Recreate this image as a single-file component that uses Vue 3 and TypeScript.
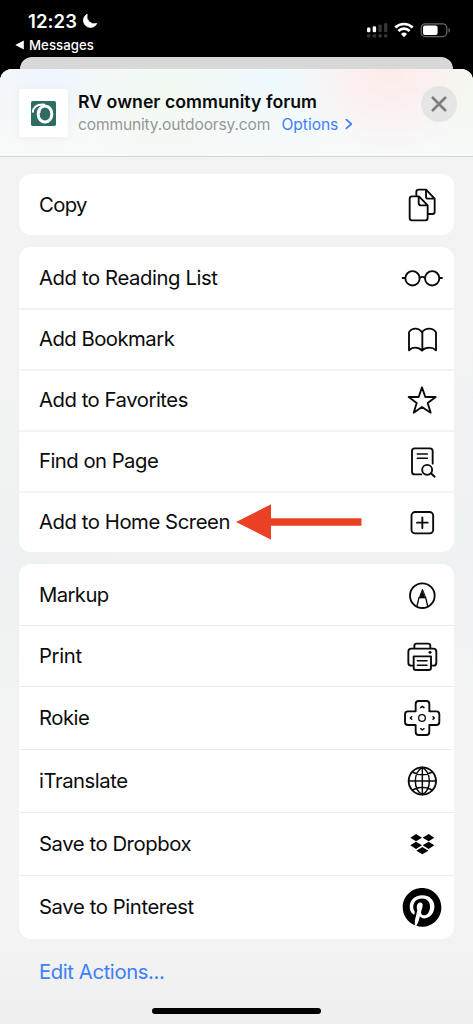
<script setup lang="ts">
interface Action {
  label: string
  icon: string
  tracking: number
  arrow?: boolean
}

const groups: { name: string; rows: Action[] }[] = [
  { name: 'single', rows: [{ label: 'Copy', icon: 'copy', tracking: -0.65 }] },
  {
    name: 'page',
    rows: [
      { label: 'Add to Reading List', icon: 'glasses', tracking: -0.4 },
      { label: 'Add Bookmark', icon: 'book', tracking: -0.52 },
      { label: 'Add to Favorites', icon: 'star', tracking: -0.47 },
      { label: 'Find on Page', icon: 'find', tracking: -0.52 },
      { label: 'Add to Home Screen', icon: 'plus', tracking: -0.44, arrow: true },
    ],
  },
  {
    name: 'apps',
    rows: [
      { label: 'Markup', icon: 'markup', tracking: -0.6 },
      { label: 'Print', icon: 'print', tracking: -0.35 },
      { label: 'Rokie', icon: 'rokie', tracking: -0.5 },
      { label: 'iTranslate', icon: 'globe', tracking: -0.45 },
      { label: 'Save to Dropbox', icon: 'dropbox', tracking: -0.44 },
      { label: 'Save to Pinterest', icon: 'pinterest', tracking: -0.4 },
    ],
  },
]
</script>

<template>
  <div class="phone">
    <div class="status">
      <div class="status-left">
        <div class="clock">
          <span class="time">12:23</span>
          <svg class="moon" width="16" height="16" viewBox="0 0 16 16">
            <path d="M5.2 1.2A7 7 0 1 0 14.8 10.4 7.4 7.4 0 0 1 5.2 1.2z" fill="#fff" stroke="#fff" stroke-width=".8" stroke-linejoin="round" />
          </svg>
        </div>
        <div class="back">
          <svg width="9" height="10" viewBox="0 0 9 10"><path d="M.3 5 8.8.6v8.8z" fill="#fff" /></svg>
          <span class="back-label">Messages</span>
        </div>
      </div>
      <svg class="signals" width="88" height="18" viewBox="0 0 88 18">
        <g fill="#fff">
          <rect x="1" y="5.6" width="3.4" height="4.6" rx="1.2" />
          <rect x="6.7" y="4.2" width="3.4" height="6" rx="1.2" />
        </g>
        <g fill="#343434">
          <rect x="12.4" y="2.4" width="3.4" height="7.8" rx="1.2" />
          <rect x="18" y="1" width="3.4" height="9.2" rx="1.2" />
          <rect x="1" y="12.2" width="3.4" height="3.4" rx="1" />
          <rect x="6.7" y="12.2" width="3.4" height="3.4" rx="1" />
          <rect x="12.4" y="12.2" width="3.4" height="3.4" rx="1" />
          <rect x="18" y="12.2" width="3.4" height="3.4" rx="1" />
        </g>
        <g fill="none" stroke="#fff" stroke-width="2.7">
          <path d="M29.3 5.5a12.6 12.6 0 0 1 17.4 0" />
          <path d="M32.4 9a8 8 0 0 1 11.2 0" />
        </g>
        <path d="M35 12a4.3 4.3 0 0 1 6 0l-3 3.2z" fill="#fff" />
        <rect x="55.2" y="1.8" width="25.6" height="12.8" rx="4" fill="none" stroke="#686868" stroke-width="1.2" />
        <rect x="57" y="3.5" width="14.6" height="9.4" rx="2" fill="#fff" />
        <path d="M82.6 6v4.6c1.7-.7 1.7-3.9 0-4.6z" fill="#777" />
      </svg>
    </div>

    <div class="back-sheet"></div>

    <div class="sheet">
      <header class="head">
        <div class="favicon">
          <svg width="25" height="25" viewBox="0 0 75 75">
            <rect x="0" y="0" width="75" height="75" rx="5" fill="#2f6c64" />
            <ellipse cx="42" cy="39" rx="20.5" ry="24" fill="none" stroke="#fff" stroke-width="9" />
            <path d="M5 35C7 17 20 9 42 11" fill="none" stroke="#fff" stroke-width="6" />
            <path d="M28 20Q25 27 26 36" fill="none" stroke="#fff" stroke-width="5" />
            <path d="M12 37C13 26 18 20 25 17" fill="none" stroke="#2f6c64" stroke-width="3" />
          </svg>
        </div>
        <div class="titles">
          <div class="title">RV owner community forum</div>
          <div class="sub">
            <span class="domain">community.outdoorsy.com</span>
            <span class="options">Options</span>
            <svg width="8" height="12" viewBox="0 0 8 12">
              <path d="M1.4 1.6 6.3 6l-4.9 4.4" fill="none" stroke="#3d80f7" stroke-width="1.7" stroke-linecap="round" stroke-linejoin="round" />
            </svg>
          </div>
        </div>
        <div class="close">
          <svg width="36" height="36" viewBox="0 0 36 36">
            <path d="M11.8 11.8 24.2 24.2M24.2 11.8 11.8 24.2" stroke="#7e7e80" stroke-width="2.7" stroke-linecap="round" />
          </svg>
        </div>
      </header>

      <main class="groups">
        <section v-for="g in groups" :key="g.name" class="card" :class="g.name">
          <div v-for="r in g.rows" :key="r.label" class="row">
            <span class="label" :style="{ letterSpacing: r.tracking + 'px' }">{{ r.label }}</span>
            <svg v-if="r.arrow" class="arrow" width="126" height="36" viewBox="0 0 126 36">
              <path d="M0 18 35 .3V14.3h90.5v7.4H35v14z" fill="#ea4025" />
            </svg>
            <svg class="icon" viewBox="-69 -69 138 138" fill="none" stroke="#0a0a0a" stroke-width="5.6" stroke-linecap="round" stroke-linejoin="round">
              <template v-if="r.icon === 'copy'">
                <path d="M-11-26H-30Q-37-26-37-19V39Q-37 46-30 46H10Q17 46 17 39V1L-9-26ZM-10-24V-6Q-10 1-3 1H16" />
                <path d="M-17-28V-39Q-17-46-10-46H12L38-19V20Q38 27 31 27H20M12-44V-25Q12-19 18-19H36" />
              </template>
              <template v-else-if="r.icon === 'glasses'">
                <circle cx="-28.5" cy="1" r="21.5" />
                <circle cx="30.5" cy="1" r="21.5" />
                <path d="M-7-1Q1-6 9-1M-58 0h7M53 0h7" />
              </template>
              <template v-else-if="r.icon === 'book'">
                <path d="M0-20Q-8-31-20-31-32-31-39-20V34Q-32 26-20 26-8 26 0 35 8 26 22 26 34 26 42 34V-20Q34-31 22-31 8-31 0-20ZM1-20V34" />
              </template>
              <path v-else-if="r.icon === 'star'" d="M0-38 10-9H41L17 9 26 38 0 21-25 38-16 9-40-9H-10Z" />
              <template v-else-if="r.icon === 'find'">
                <path d="M32 8V-30Q32-38 24-38H-22Q-30-38-30-30V32Q-30 40-22 40H-2" />
                <path d="M-14-21H16M-14-8H16" stroke-width="4.6" />
                <circle cx="15.5" cy="26.5" r="15" />
                <path d="M27 37 38 47" stroke-width="6" />
              </template>
              <template v-else-if="r.icon === 'plus'">
                <rect x="-31.5" y="-30" width="65" height="64" rx="11" />
                <path d="M1-14V18M-15 2H17" />
              </template>
              <template v-else-if="r.icon === 'markup'">
                <circle cx="1" cy="2" r="37" />
                <path d="M-9 8-15 33M11 8 17 33M-9 8H11" stroke-width="4" />
                <path d="M1-16-8 8H10Z" fill="#0a0a0a" stroke-width="3" />
              </template>
              <template v-else-if="r.icon === 'print'">
                <path d="M-23-24V-30Q-23-37-16-37H18Q25-37 25-30V-24" />
                <path d="M-26 29H-32Q-41 29-41 20V-13Q-41-22-32-22H34Q43-22 43-13V20Q43 29 34 29H28" />
                <path d="M-25 1H27V35Q27 42 20 42H-18Q-25 42-25 35Z" />
                <path d="M-14 14H15M-14 28H15" stroke-width="4.6" />
                <circle cx="24" cy="-11" r="3.5" fill="#0a0a0a" stroke-width="2" />
              </template>
              <template v-else-if="r.icon === 'rokie'">
                <path d="M-19-42Q-19-51-10-51H13Q22-51 22-42V-20H43Q52-20 52-11V12Q52 21 43 21H22V42Q22 51 13 51H-10Q-19 51-19 42V21H-42Q-51 21-51 12V-11Q-51-20-42-20H-19Z" />
                <circle cx="0" cy="0" r="10" stroke-width="4" />
                <path d="M-4-31 1-35 6-31M-4 32 1 36 6 32M-31-4-35 0-31 4M33-4 37 0 33 4" stroke-width="4.4" />
              </template>
              <template v-else-if="r.icon === 'globe'">
                <circle cx="1" cy="0" r="41" />
                <path d="M1-41V41M-40 0H42M1-41C-27-25-27 25 1 41M1-41C29-25 29 25 1 41M-29-27Q1-10 31-27M-29 27Q1 10 31 27" stroke-width="4.4" />
              </template>
              <path
                v-else-if="r.icon === 'dropbox'"
                d="M-18-30-35-19-18-8 0-19ZM20-30 2-19 20-8 37-19ZM-18-7-35 4-18 15 0 4ZM20-7 2 4 20 15 37 4ZM1 9-17 20 1 31 19 20Z"
                fill="#000"
                stroke="none"
              />
              <g v-else transform="translate(-58 -57) scale(4.84)" fill="#000" stroke="none">
                <path
                  d="M12.017 0C5.396 0 .029 5.367.029 11.987c0 5.079 3.158 9.417 7.618 11.162-.105-.949-.199-2.403.041-3.439.219-.937 1.406-5.957 1.406-5.957s-.359-.72-.359-1.781c0-1.663.967-2.911 2.168-2.911 1.024 0 1.518.769 1.518 1.688 0 1.029-.653 2.567-.992 3.992-.285 1.193.6 2.165 1.775 2.165 2.128 0 3.768-2.245 3.768-5.487 0-2.861-2.063-4.869-5.008-4.869-3.41 0-5.409 2.562-5.409 5.199 0 1.033.394 2.143.889 2.741.099.12.112.225.085.345-.09.375-.293 1.199-.334 1.363-.053.225-.172.271-.401.165-1.495-.69-2.433-2.878-2.433-4.646 0-3.776 2.748-7.252 7.92-7.252 4.158 0 7.392 2.967 7.392 6.923 0 4.135-2.607 7.462-6.233 7.462-1.214 0-2.354-.629-2.758-1.379l-.749 2.848c-.269 1.045-1.004 2.352-1.498 3.146 1.123.345 2.306.535 3.55.535 6.607 0 11.985-5.365 11.985-11.987C23.97 5.39 18.592.026 11.985.026z"
                />
              </g>
            </svg>
          </div>
        </section>
      </main>

      <div class="edit">Edit Actions...</div>
      <div class="home"></div>
    </div>
  </div>
</template>

<style>
html,
body {
  margin: 0;
  background: #000;
}
</style>

<style scoped>
.phone {
  width: 473px;
  height: 1024px;
  overflow: hidden;
  background: #000;
  font-family: Inter, 'Liberation Sans', sans-serif;
  color: #0b0b0c;
  display: flex;
  flex-direction: column;
}
svg {
  display: block;
  flex: none;
}
.status {
  height: 57px;
  box-sizing: border-box;
  display: flex;
  justify-content: space-between;
  color: #fff;
  padding: 11px 16px 0 15px;
}
.clock {
  display: flex;
  align-items: center;
  height: 20px;
  padding-left: 13px;
  gap: 5px;
}
.time {
  font-size: 18.5px;
  font-weight: 600;
  letter-spacing: 0.1px;
}
.back {
  display: flex;
  align-items: center;
  height: 18px;
  margin-top: 5px;
  gap: 5px;
}
.back-label {
  font-size: 13.2px;
  font-weight: 500;
  letter-spacing: 0.05px;
}
.signals {
  margin-top: 11px;
  margin-right: 3px;
}
.back-sheet {
  height: 12px;
  flex: none;
  margin: 0 20px;
  background: #d8d8d8;
  border-radius: 12px 12px 0 0;
}
.sheet {
  flex: 1;
  display: flex;
  flex-direction: column;
  border-radius: 12px 12px 0 0;
  overflow: hidden;
  background:
    radial-gradient(ellipse 240px 200px at 100% 48%, rgba(236, 241, 242, 0.6), rgba(236, 241, 242, 0)),
    radial-gradient(ellipse 240px 200px at 0% 52%, rgba(236, 241, 240, 0.6), rgba(236, 241, 240, 0)),
    linear-gradient(#f3f3f3, #f2f2f3 50%, #f4f4f4 88%, #efefef);
}
.head {
  height: 88px;
  box-sizing: border-box;
  flex: none;
  display: flex;
  border-bottom: 1px solid #d6d7d7;
  padding: 0 16px 0 19px;
  background:
    radial-gradient(ellipse 95px 80px at 390px 2px, rgba(255, 232, 232, 0.9), rgba(255, 232, 232, 0)),
    radial-gradient(ellipse 90px 80px at 270px 12px, rgba(238, 250, 255, 0.9), rgba(238, 250, 255, 0)),
    radial-gradient(ellipse 90px 75px at 165px 25px, rgba(240, 250, 240, 0.9), rgba(240, 250, 240, 0)),
    radial-gradient(ellipse 100px 70px at 50px 5px, rgba(238, 245, 254, 0.9), rgba(238, 245, 254, 0)),
    radial-gradient(ellipse 60px 80px at 473px 10px, rgba(242, 250, 238, 0.9), rgba(242, 250, 238, 0)),
    #f8f9f9;
}
.favicon {
  width: 49px;
  height: 48px;
  margin-top: 20px;
  flex: none;
  background: #fff;
  border-radius: 2px;
  box-shadow: 0 1px 10px rgba(0, 0, 0, 0.05);
  display: flex;
  align-items: center;
  justify-content: center;
}
.titles {
  padding: 22px 0 0 10px;
  flex: 1;
  white-space: nowrap;
}
.title {
  font-size: 17.7px;
  font-weight: 600;
  line-height: 22px;
  letter-spacing: 0.03px;
}
.sub {
  display: flex;
  align-items: center;
  height: 22px;
  font-size: 15.6px;
}
.domain {
  color: #959798;
  width: 203.5px;
  letter-spacing: -0.17px;
}
.options {
  color: #3d80f7;
  width: 63px;
  letter-spacing: -0.05px;
}
.close {
  width: 36px;
  height: 36px;
  margin-top: 17px;
  border-radius: 50%;
  background: #e6e5e5;
}
.groups {
  display: flex;
  flex-direction: column;
  gap: 12px;
  padding: 17px 19px 0 19px;
}
.card {
  background: #fff;
  border-radius: 12px;
}
.row {
  height: 61px;
  box-sizing: border-box;
  display: flex;
  align-items: center;
  padding: 0 9.5px 0 20px;
}
.row + .row {
  border-top: 1px solid #ececed;
}
.page .row + .row {
  border-top: 2px solid #f4f4f4;
  padding-bottom: 2px;
}
.apps {
  padding-bottom: 1px;
}
.apps .row:nth-child(n + 3) {
  height: 63px;
}
.label {
  font-size: 20.3px;
  line-height: 26px;
  white-space: nowrap;
}
.arrow {
  margin-left: 6px;
}
.icon {
  width: 46px;
  height: 46px;
  margin-left: auto;
}
.edit {
  margin: 20px 0 0 39px;
  font-size: 20.3px;
  line-height: 26px;
  letter-spacing: -0.4px;
  color: #3d80f7;
}
.home {
  width: 169px;
  height: 6px;
  border-radius: 3px;
  background: #000;
  margin: auto auto 10px;
}
</style>
